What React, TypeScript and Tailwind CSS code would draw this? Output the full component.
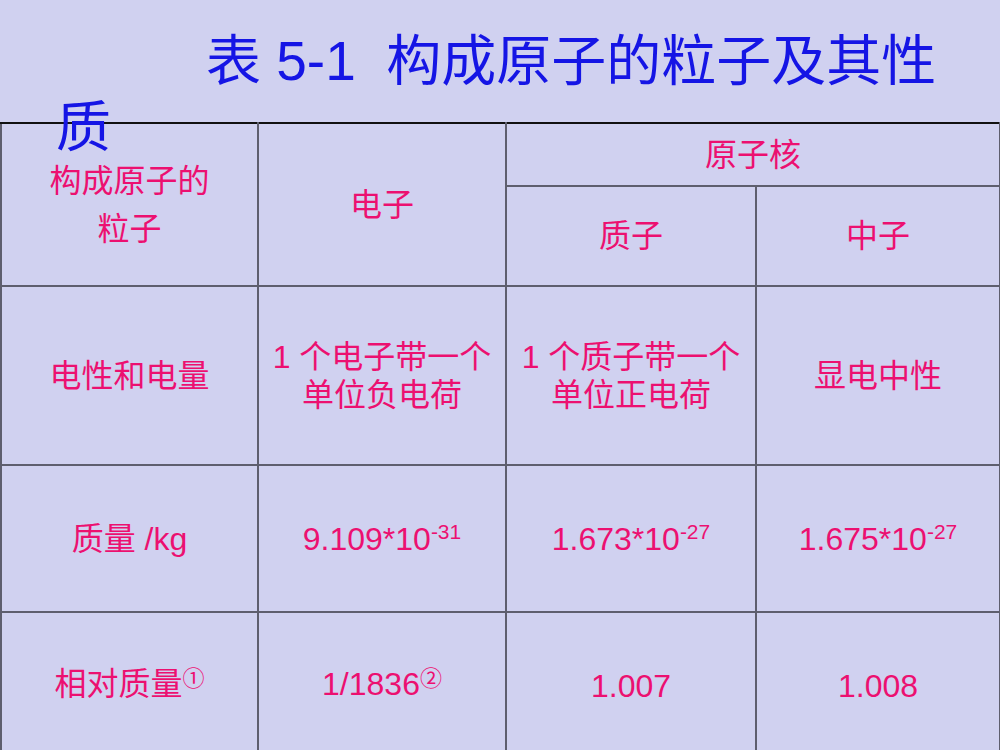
const pink = "text-[#ec1070]";
const cell = "border-2 border-[#5e5e6e] p-0 text-center align-middle font-normal";

function Sup({ children }: { children: React.ReactNode }) {
  return <sup className="relative -top-[11px] align-baseline text-[21px]">{children}</sup>;
}

function Mark({ children }: { children: React.ReactNode }) {
  return <span className="relative -top-[9px] text-[22px]">{children}</span>;
}

export default function App() {
  return (
    <div className="h-[750px] w-[1000px] overflow-hidden bg-[#d0d1f0] font-['Liberation_Sans','Noto_Sans_CJK_SC',sans-serif]">
      {/* Title */}
      <div className="relative z-10 h-[122px] pl-[56px] pt-[28px] text-[55px] leading-[66px] text-[#1515e5] indent-[150px] whitespace-nowrap">
        表 5-1{"\u00a0\u00a0"}构成原子的粒子及其性
        <br />
        质
      </div>

      {/* Table */}
      <table className={`w-[999px] table-fixed border-collapse text-[32px] leading-[38px] ${pink}`}>
        <colgroup>
          <col className="w-[257px]" />
          <col className="w-[248px]" />
          <col className="w-[250px]" />
          <col className="w-[244px]" />
        </colgroup>
        <tbody>
          <tr className="h-[63px]">
            <td rowSpan={2} className={`${cell} border-t-[#111] leading-[48px]`}>
              构成原子的
              <br />
              粒子
            </td>
            <td rowSpan={2} className={`${cell} border-t-[#111]`}>
              电子
            </td>
            <td colSpan={2} className={`${cell} border-t-[#111]`}>
              原子核
            </td>
          </tr>
          <tr className="h-[100px]">
            <td className={cell}>质子</td>
            <td className={cell}>中子</td>
          </tr>
          <tr className="h-[179px]">
            <td className={cell}>电性和电量</td>
            <td className={`${cell} whitespace-nowrap`}>
              1 个电子带一个
              <br />
              单位负电荷
            </td>
            <td className={`${cell} whitespace-nowrap`}>
              1 个质子带一个
              <br />
              单位正电荷
            </td>
            <td className={cell}>显电中性</td>
          </tr>
          <tr className="h-[147px]">
            <td className={cell}>质量 /kg</td>
            <td className={cell}>
              9.109*10<Sup>-31</Sup>
            </td>
            <td className={cell}>
              1.673*10<Sup>-27</Sup>
            </td>
            <td className={cell}>
              1.675*10<Sup>-27</Sup>
            </td>
          </tr>
          <tr className="h-[148px]">
            <td className={cell}>
              相对质量<Mark>①</Mark>
            </td>
            <td className={cell}>
              1/1836<Mark>②</Mark>
            </td>
            <td className={cell}>1.007</td>
            <td className={cell}>1.008</td>
          </tr>
        </tbody>
      </table>
    </div>
  );
}
